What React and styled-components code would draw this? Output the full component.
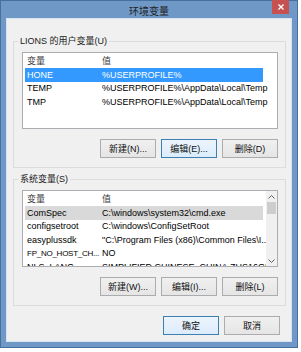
import styled, { createGlobalStyle } from "styled-components";

const GlobalStyle = createGlobalStyle`
  html, body {
    margin: 0;
    background: #ffffff;
  }
  body {
    font-family: "Liberation Sans", "Noto Sans CJK SC", sans-serif;
    font-size: 9px;
    color: #000;
  }
`;

const userVars = [
  { name: "HONE", value: "%USERPROFILE%" },
  { name: "TEMP", value: "%USERPROFILE%\\AppData\\Local\\Temp" },
  { name: "TMP", value: "%USERPROFILE%\\AppData\\Local\\Temp" },
];

const systemVars = [
  { name: "ComSpec", value: "C:\\windows\\system32\\cmd.exe" },
  { name: "configsetroot", value: "C:\\windows\\ConfigSetRoot" },
  { name: "easyplussdk", value: "\"C:\\Program Files (x86)\\Common Files\\I..." },
  { name: "FP_NO_HOST_CH...", value: "NO", tight: true },
  { name: "NLS_LANG", value: "SIMPLIFIED CHINESE_CHINA.ZHS16GBK" },
];

function VarList({ rows, selected, active, scroll }) {
  return (
    <ListBox>
      <Columns>
        <Row header>
          <NameCell>变量</NameCell>
          <ValueCell>值</ValueCell>
        </Row>
        {rows.map((row, i) => (
          <Row key={row.name} selected={i === selected} active={active}>
            <NameCell tight={row.tight}>{row.name}</NameCell>
            <ValueCell>{row.value}</ValueCell>
          </Row>
        ))}
      </Columns>
      {scroll && (
        <ScrollBar>
          <Arrow>
            <svg width="7" height="4" viewBox="0 0 7 4">
              <path d="M0.5 3.5 L3.5 0.5 L6.5 3.5" fill="none" stroke="#606060" strokeWidth="1" />
            </svg>
          </Arrow>
          <Track>
            <Thumb />
          </Track>
          <Arrow>
            <svg width="7" height="4" viewBox="0 0 7 4">
              <path d="M0.5 0.5 L3.5 3.5 L6.5 0.5" fill="none" stroke="#606060" strokeWidth="1" />
            </svg>
          </Arrow>
        </ScrollBar>
      )}
    </ListBox>
  );
}

export default function App() {
  return (
    <>
      <GlobalStyle />
      <Window>
        <TitleBar>
          环境变量
          <CloseButton>
            <svg width="6" height="6" viewBox="0 0 6 6">
              <path d="M0.5 0.5 L5.5 5.5 M5.5 0.5 L0.5 5.5" stroke="#fff" strokeWidth="1.4" />
            </svg>
          </CloseButton>
        </TitleBar>
        <Client>
          <GroupBox>
            <Legend>LIONS 的用户变量(U)</Legend>
            <VarList rows={userVars} selected={0} active />
            <ButtonRow>
              <Button>新建(N)...</Button>
              <Button focused>编辑(E)...</Button>
              <Button>删除(D)</Button>
            </ButtonRow>
          </GroupBox>
          <GroupBox second>
            <Legend>系统变量(S)</Legend>
            <VarList rows={systemVars} selected={0} scroll />
            <ButtonRow>
              <Button>新建(W)...</Button>
              <Button>编辑(I)...</Button>
              <Button>删除(L)</Button>
            </ButtonRow>
          </GroupBox>
          <DialogButtons>
            <Button focused>确定</Button>
            <Button>取消</Button>
          </DialogButtons>
        </Client>
      </Window>
    </>
  );
}

const Window = styled.div`
  width: 298px;
  height: 348px;
  box-sizing: border-box;
  background: #6f98c6;
  border: 1px solid #46709f;
  padding: 0 5px 5px 5px;
  display: flex;
  flex-direction: column;
`;

const TitleBar = styled.div`
  position: relative;
  height: 17px;
  padding-top: 2px;
  box-sizing: border-box;
  display: flex;
  align-items: center;
  justify-content: center;
  font-family: "Noto Sans CJK SC", sans-serif;
  font-size: 10px;
  color: #1f1f1f;
`;

const CloseButton = styled.div`
  position: absolute;
  top: -1px;
  right: 3px;
  width: 17px;
  height: 14px;
  background: #c75050;
  display: flex;
  align-items: center;
  justify-content: center;
`;

const Client = styled.div`
  flex: 1;
  background: #f0f0f0;
  border: 1px solid #d6e3f1;
  padding: 22px 5px 0 6px;
  display: flex;
  flex-direction: column;
`;

const GroupBox = styled.div`
  position: relative;
  border: 1px solid #dcdcdc;
  padding: 10px 7px 9px 8px;
  margin-top: ${({ second }) => (second ? "11px" : "0")};
  display: flex;
  flex-direction: column;
`;

const Legend = styled.div`
  position: absolute;
  top: -6px;
  left: 4px;
  padding: 0 2px;
  background: #f0f0f0;
  line-height: 11px;
  color: #1a1a1a;
`;

const ListBox = styled.div`
  height: 77px;
  box-sizing: border-box;
  background: #fff;
  border: 1px solid #abadb3;
  padding-left: 2px;
  display: flex;
  overflow: hidden;
`;

const Columns = styled.div`
  flex: 1;
  min-width: 0;
  display: flex;
  flex-direction: column;
`;

const Row = styled.div`
  display: flex;
  flex-shrink: 0;
  width: 238px;
  height: ${({ header }) => (header ? "15px" : "13.5px")};
  align-items: center;
  white-space: nowrap;
  color: ${({ header, selected, active }) =>
    header ? "#3c3c3c" : selected && active ? "#fff" : "#000"};
  background: ${({ selected, active }) =>
    selected ? (active ? "#3399ff" : "#d9d9d9") : "transparent"};
`;

const NameCell = styled.div`
  width: 75px;
  flex-shrink: 0;
  padding-left: 2px;
  box-sizing: border-box;
  overflow: hidden;
  font-size: ${({ tight }) => (tight ? "8px" : "9px")};
  letter-spacing: ${({ tight }) => (tight ? "-0.25px" : "0")};
`;

const ValueCell = styled.div`
  flex: 1;
  padding-left: 2px;
  overflow: visible;
`;

const ScrollBar = styled.div`
  position: relative;
  width: 11px;
  flex-shrink: 0;
  background: #f0f0f0;
  display: flex;
  flex-direction: column;
`;

const Arrow = styled.div`
  height: 11px;
  display: flex;
  align-items: center;
  justify-content: center;
`;

const Track = styled.div`
  flex: 1;
  padding: 0 1px;
`;

const Thumb = styled.div`
  height: 12px;
  background: #cdcdcd;
`;

const ButtonRow = styled.div`
  display: flex;
  justify-content: flex-end;
  gap: 5px;
  margin-top: 10px;
`;

const DialogButtons = styled.div`
  display: flex;
  justify-content: flex-end;
  gap: 5px;
  margin-top: 10px;
  padding-right: 6px;
`;

const Button = styled.div`
  width: 56px;
  height: 19px;
  box-sizing: border-box;
  display: flex;
  align-items: center;
  justify-content: center;
  border: 1px solid ${({ focused }) => (focused ? "#3c7fb1" : "#acacac")};
  background: ${({ focused }) =>
    focused
      ? "linear-gradient(#ecf4fc, #dcecfc)"
      : "linear-gradient(#f0f0f0, #e5e5e5)"};
  color: #111;
  font-size: 9px;
`;
